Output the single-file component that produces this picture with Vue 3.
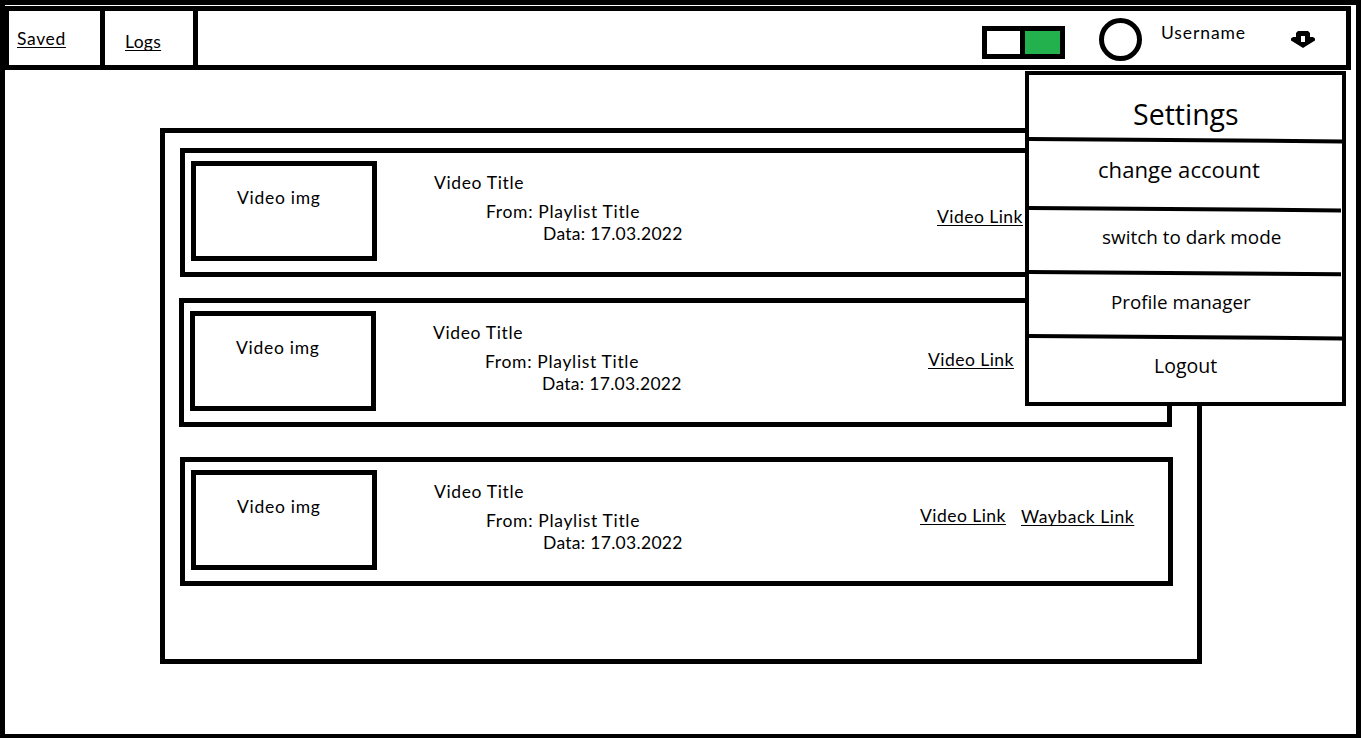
<script setup>
const videos = [
  { id: 'first', links: [{ label: 'Video Link', cls: 'video' }] },
  { id: 'second', links: [{ label: 'Video Link', cls: 'video' }] },
  {
    id: 'third',
    links: [
      { label: 'Video Link', cls: 'video' },
      { label: 'Wayback Link', cls: 'wayback' }
    ]
  }
]

const menu = [
  { id: 'settings', label: 'Settings' },
  { id: 'account', label: 'change account' },
  { id: 'theme', label: 'switch to dark mode' },
  { id: 'profile', label: 'Profile manager' },
  { id: 'logout', label: 'Logout' }
]
</script>

<template>
  <div class="page">
    <header class="nav">
      <a class="tab saved"><span>Saved</span></a>
      <a class="tab logs"><span>Logs</span></a>
      <div class="toggle"><i class="off"></i><i class="on"></i></div>
      <div class="avatar"></div>
      <span class="username">Username</span>
      <svg class="arrow" width="24" height="17" viewBox="0 0 24 17">
        <path fill-rule="evenodd" d="M7 0H17L19 2V6H22L24 7.500V9.500L13.500 16L12 17L10.500 16L0 9.500V7.500L2 6H5V2ZM10 5V11H14V5Z" />
      </svg>
    </header>

    <main class="panel">
      <article v-for="v in videos" :key="v.id" class="row" :class="v.id">
        <div class="thumb">Video img</div>
        <div class="info">
          <div class="title">Video Title</div>
          <div class="from">From: Playlist Title</div>
          <div class="date">Data: 17.03.2022</div>
        </div>
        <div class="links">
          <a v-for="l in v.links" :key="l.label" :class="l.cls">{{ l.label }}</a>
        </div>
      </article>
    </main>

    <aside class="menu">
      <div v-for="m in menu" :key="m.id" class="item" :class="m.id">{{ m.label }}</div>
      <svg class="rules" width="313" height="327" viewBox="0 0 313 327">
        <path d="M0 64L313 66.400M0 133L312 135.400M0 197L312 199.200M0 261L313 263.400" />
      </svg>
    </aside>
  </div>
</template>

<style>
body {
  background: #fff;
}
</style>

<style scoped>
.page {
  position: relative;
  box-sizing: border-box;
  width: 1361px;
  height: 738px;
  padding-top: 1px;
  border: 5px solid #000;
  border-bottom-width: 4px;
  background: #fff;
  color: #000;
  font: 17.5px/20px Lato, "Open Sans", sans-serif;
  letter-spacing: 0.3px;
  white-space: nowrap;
  overflow: hidden;
}
.nav {
  display: flex;
  align-items: flex-start;
  box-sizing: border-box;
  width: 1346px;
  height: 64px;
  border: 5px solid #000;
  border-left-width: 4px;
}
.tab {
  box-sizing: border-box;
  height: 54px;
  border-right: 5px solid #000;
}
.tab span,
.links a {
  text-decoration: underline;
  text-decoration-thickness: 1px;
  text-underline-offset: 2px;
  text-decoration-skip-ink: none;
}
.saved {
  width: 96px;
  padding: 18px 0 0 8px;
  letter-spacing: 0.64px;
}
.logs {
  width: 93px;
  padding: 21px 0 0 20px;
}
.toggle {
  display: flex;
  box-sizing: border-box;
  width: 83px;
  height: 33px;
  margin: 15px 0 0 784px;
  border: 5px solid #000;
}
.off {
  width: 33px;
  border-right: 5px solid #000;
}
.on {
  flex: 1;
  background: #22b14c;
}
.avatar {
  box-sizing: border-box;
  width: 43px;
  height: 43px;
  margin: 7px 0 0 34px;
  border: 5px solid #000;
  border-radius: 50%;
}
.username {
  width: 86px;
  margin: 12px 0 0 19px;
  letter-spacing: 0.9px;
}
.arrow {
  margin: 20px 0 0 44px;
}
.panel {
  box-sizing: border-box;
  width: 1042px;
  height: 536px;
  margin: 58px 0 0 155px;
  padding: 15px 0 0 15px;
  border: 5px solid #000;
}
.row {
  display: flex;
  align-items: flex-start;
  box-sizing: border-box;
  width: 993px;
  height: 129px;
  border: 5px solid #000;
}
.second {
  margin: 21px 0 30px -1px;
}
.thumb {
  box-sizing: border-box;
  width: 186px;
  height: 100px;
  margin: 8px 0 0 6px;
  padding: 22px 0 0 41px;
  border: 5px solid #000;
  letter-spacing: 0.72px;
}
.info {
  width: 300px;
  margin: 20px 0 0 57px;
}
.title {
  letter-spacing: 0.63px;
}
.from {
  margin: 9px 0 2px 52px;
  letter-spacing: 0.67px;
}
.date {
  margin-left: 109px;
}
.links {
  display: flex;
  gap: 15px;
}
.first .links {
  margin: 54px 0 0 203px;
}
.second .links {
  margin: 47px 0 0 195px;
}
.third .links {
  margin: 44px 0 0 186px;
}
.links .video {
  width: 86px;
  letter-spacing: 0.46px;
}
.wayback {
  margin-top: 1px;
  letter-spacing: 0.55px;
}
.menu {
  position: absolute;
  top: 66px;
  left: 1020px;
  box-sizing: border-box;
  width: 321px;
  height: 335px;
  border: 4px solid #000;
  background: #fff;
  font-family: "Open Sans", "Noto Sans", sans-serif;
  letter-spacing: 0;
}
.item {
  box-sizing: border-box;
  height: 64px;
  font-size: 19px;
  line-height: 24px;
}
.item.settings {
  padding: 21px 0 0 104px;
  font-size: 28.5px;
  line-height: 36px;
}
.item.account {
  height: 69px;
  padding: 16px 0 0 69px;
  font-size: 22.1px;
  line-height: 28px;
}
.item.theme {
  padding: 17px 0 0 73px;
  font-size: 18.9px;
}
.item.profile {
  padding: 18px 0 0 82px;
  font-size: 18.8px;
}
.item.logout {
  padding: 18px 0 0 125px;
  font-size: 19.5px;
}
.rules {
  position: absolute;
  top: 0;
  left: 0;
  fill: none;
  stroke: #000;
  stroke-width: 4;
}
</style>
